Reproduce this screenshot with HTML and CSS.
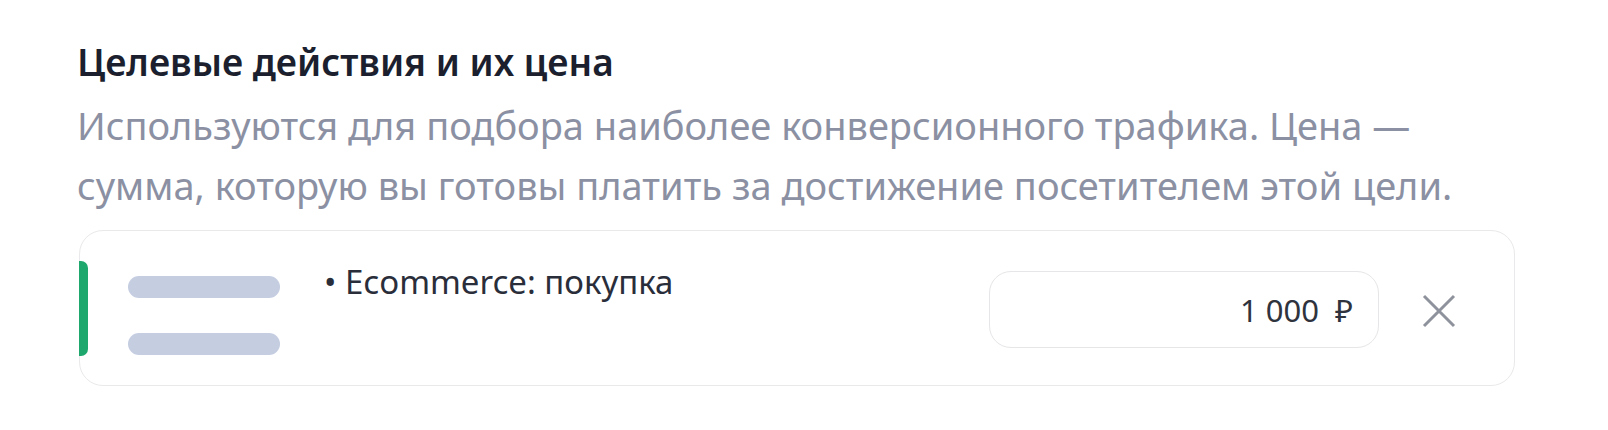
FILE: index.html
```html
<!DOCTYPE html>
<html lang="ru">
<head>
<meta charset="utf-8">
<link rel="stylesheet" href="styles.css">
</head>
<body>
<section class="goals">
  <h2 class="goals-title">Целевые действия и их цена</h2>
  <p class="goals-desc">Используются для подбора наиболее конверсионного трафика. Цена —<br>сумма, которую вы готовы платить за достижение посетителем этой цели.</p>
  <div class="goal-card">
    <div class="goal-accent"></div>
    <div class="goal-pills">
      <span class="pill"></span>
      <span class="pill"></span>
    </div>
    <div class="goal-name">• Ecommerce: покупка</div>
    <div class="goal-price">
      <span class="price-value">1 000</span><span class="price-cur">₽</span>
    </div>
    <button class="goal-remove" aria-label="Удалить">
      <svg width="34" height="34" viewBox="0 0 34 34"><path d="M2 2 L32 32 M32 2 L2 32" stroke="#8e929c" stroke-width="3" fill="none"/></svg>
    </button>
  </div>
</section>
</body>
</html>
```
FILE: styles.css
```css
html, body {
  margin: 0;
  padding: 0;
  background: #ffffff;
}
body {
  font-family: "Noto Sans", "Open Sans", sans-serif;
}
.goals {
  padding: 38px 0 0 77px;
  width: 1438px;
}
.goals-title {
  margin: 0;
  font-size: 37px;
  font-weight: 600;
  line-height: 48px;
  color: #1b1f2e;
}
.goals-desc {
  margin: 9px 0 0 0;
  font-size: 38px;
  line-height: 60px;
  color: #8b90a3;
}
.goal-card {
  margin: 15px 0 0 2px;
  height: 156px;
  box-sizing: border-box;
  border: 1px solid #e9e9eb;
  border-radius: 24px;
  display: flex;
  align-items: flex-start;
}
.goal-accent {
  width: 9px;
  height: 95px;
  margin-top: 30px;
  margin-left: -1px;
  background: #1ea86d;
  border-radius: 0 7px 7px 0;
}
.goal-pills {
  display: flex;
  flex-direction: column;
  gap: 35px;
  margin: 45px 0 0 40px;
}
.pill {
  display: block;
  width: 152px;
  height: 22px;
  border-radius: 11px;
  background: #c5cde1;
}
.goal-name {
  margin: 31px 0 0 44px;
  font-size: 33px;
  line-height: 40px;
  color: #2a2e3a;
  flex: 1;
}
.goal-price {
  margin-top: 40px;
  width: 390px;
  height: 77px;
  box-sizing: border-box;
  border: 1px solid #e6e6e8;
  border-radius: 22px;
  display: flex;
  align-items: center;
  justify-content: flex-end;
  padding-right: 25px;
  font-size: 31px;
  color: #2f333d;
  gap: 16px;
}
.goal-remove {
  margin: 63px 58px 0 43px;
  padding: 0;
  border: 0;
  background: none;
  width: 34px;
  height: 34px;
  display: block;
}
.goal-remove svg {
  display: block;
}
```
